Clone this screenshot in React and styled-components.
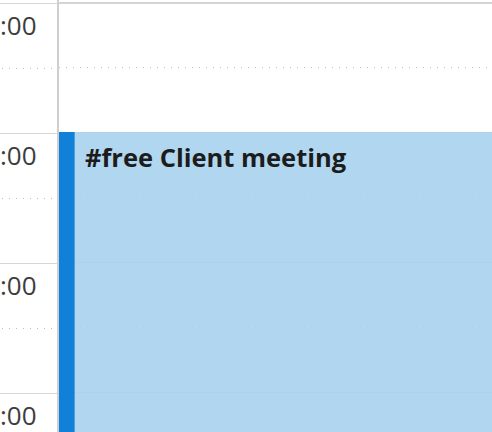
import React from "react";
import styled, { createGlobalStyle } from "styled-components";

const Global = createGlobalStyle`
  html, body { margin: 0; padding: 0; background: #fff; overflow: hidden; }
  body { font-family: "Open Sans", "Noto Sans", sans-serif; }
`;

const Calendar = styled.div`
  display: flex;
  width: 492px;
  height: 432px;
  overflow: hidden;
  position: relative;
`;

const TimeColumn = styled.div`
  width: 57px;
  flex: none;
  padding-top: 3px;
  border-right: 2px solid #cfcfcf;
  overflow: hidden;
`;

const HourSlot = styled.div`
  height: 130px;
  box-sizing: border-box;
  border-top: 1px solid #d6d6d6;
  display: flex;
  flex-direction: column;
`;

const HalfTop = styled.div`
  height: 64px;
  flex: none;
`;

const Dotted = styled.div`
  height: 1px;
  flex: none;
  background-image: linear-gradient(to right, #bdbdbd 1px, transparent 1px);
  background-size: 7px 1px;
  background-position: ${(p) => p.$offset || 0}px 0;
`;

const TimeLabel = styled.div`
  font-size: 26px;
  line-height: 26px;
  color: #3d3d3d;
  text-align: right;
  padding: 8px 24px 0 0;
  white-space: nowrap;
`;

const DayColumn = styled.div`
  flex: 1;
  padding-top: 2px;
  position: relative;
`;

const DaySlot = styled.div`
  height: 130px;
  box-sizing: border-box;
  border-top: ${(p) => (p.$first ? "2px solid #d4d4d4" : "1px solid #d6d6d6")};
  display: flex;
  flex-direction: column;
`;

const DayHalf = styled.div`
  height: ${(p) => p.$h}px;
  flex: none;
`;

const Event = styled.div`
  position: absolute;
  left: 0;
  right: 0;
  top: 132px;
  height: 400px;
  display: flex;
  background: rgba(168, 209, 238, 0.9);
`;

const Stripe = styled.div`
  width: 15px;
  flex: none;
  background: #1180d9;
  border-right: 1px solid rgba(255, 255, 255, 0.25);
`;

const EventTitle = styled.div`
  font-size: 25.5px;
  line-height: 26px;
  font-weight: 700;
  color: #1c1c1c;
  padding: 12px 0 0 10px;
  white-space: nowrap;
`;

export default function App() {
  const rows = [0, 1, 2, 3];
  return (
    <>
      <Global />
      <Calendar>
        <TimeColumn>
          {rows.map((r) => (
            <HourSlot key={r}>
              <HalfTop>
                <TimeLabel>:00</TimeLabel>
              </HalfTop>
              <Dotted $offset={2} />
            </HourSlot>
          ))}
        </TimeColumn>
        <DayColumn>
          {rows.map((r) => (
            <DaySlot key={r} $first={r === 0}>
              <DayHalf $h={r === 0 ? 63 : 64} />
              <Dotted $offset={0} />
            </DaySlot>
          ))}
          <Event>
            <Stripe />
            <EventTitle>#free Client meeting</EventTitle>
          </Event>
        </DayColumn>
      </Calendar>
    </>
  );
}
